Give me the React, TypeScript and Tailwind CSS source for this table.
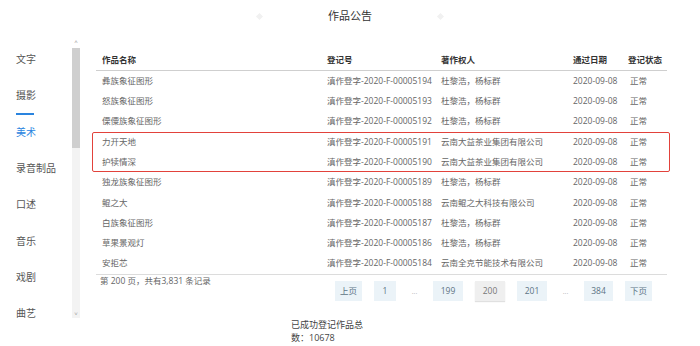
import React from "react";

type Row = { name: string; no: string; owner: string; date: string; state: string };

const rows: Row[] = [
    { name: "彝族象征图形", no: "滇作登字-2020-F-00005194", owner: "杜黎浩，杨标群", date: "2020-09-08", state: "正常" },
    { name: "怒族象征图形", no: "滇作登字-2020-F-00005193", owner: "杜黎浩，杨标群", date: "2020-09-08", state: "正常" },
    { name: "傈僳族象征图形", no: "滇作登字-2020-F-00005192", owner: "杜黎浩，杨标群", date: "2020-09-08", state: "正常" },
    { name: "力开天地", no: "滇作登字-2020-F-00005191", owner: "云南大益茶业集团有限公司", date: "2020-09-08", state: "正常" },
    { name: "护犊情深", no: "滇作登字-2020-F-00005190", owner: "云南大益茶业集团有限公司", date: "2020-09-08", state: "正常" },
    { name: "独龙族象征图形", no: "滇作登字-2020-F-00005189", owner: "杜黎浩，杨标群", date: "2020-09-08", state: "正常" },
    { name: "鲲之大", no: "滇作登字-2020-F-00005188", owner: "云南鲲之大科技有限公司", date: "2020-09-08", state: "正常" },
    { name: "白族象征图形", no: "滇作登字-2020-F-00005187", owner: "杜黎浩，杨标群", date: "2020-09-08", state: "正常" },
    { name: "草果景观灯", no: "滇作登字-2020-F-00005186", owner: "杜黎浩，杨标群", date: "2020-09-08", state: "正常" },
    { name: "安拒芯", no: "滇作登字-2020-F-00005184", owner: "云南全克节能技术有限公司", date: "2020-09-08", state: "正常" },
];

const categories = ["文字", "摄影", "美术", "录音制品", "口述", "音乐", "戏剧", "曲艺"];

const cols = "grid grid-cols-[225px_114px_132px_57px_43px] h-[20.3px] items-center";

const TableRow: React.FC<{ row: Row }> = ({ row }) => (
    <div className={`${cols} text-[8.5px] text-[#666]`}>
        <div className="pl-[6px]">{row.name}</div>
        <div className="pl-[6px]">{row.no}</div>
        <div className="pl-[6px]">{row.owner}</div>
        <div className="pl-[6px]">{row.date}</div>
        <div className="pl-[6px]">{row.state}</div>
    </div>
);

const PageBtn: React.FC<{ label: string; w: string; current?: boolean }> = ({ label, w, current }) => (
    <div
        className={`${w} h-[20px] flex items-center justify-center text-[8.5px] ${current
            ? "bg-[#efefef] text-[#777] shadow-[0_1px_1px_rgba(0,0,0,0.12)]"
            : "bg-[#ebf3f8] text-[#5d7385]"
            }`}
    >
        {label}
    </div>
);

const Dots = () => <div className="w-[13px] h-[20px] flex items-center justify-center text-[7px] text-[#b5b5b5] pt-[3px]">...</div>;

const App: React.FC = () => {
    return (
        <div
            className="w-[700px] h-[346px] bg-white overflow-hidden"
            style={{ fontFamily: '"Open Sans", "Noto Sans CJK SC", sans-serif' }}
        >
            <div className="h-[32px] flex items-center justify-center gap-[66px]">
                <div className="w-[5px] h-[5px] rotate-45 bg-[#f1f1f1]" />
                <h1 className="text-[11px] text-[#333]">作品公告</h1>
                <div className="w-[5px] h-[5px] rotate-45 bg-[#f1f1f1]" />
            </div>

            <div className="flex">
                {/* category menu */}
                <div className="w-[96px] flex">
                    <div className="w-[72px] flex flex-col pt-[9px]">
                        {categories.map((c) => (
                            <div key={c} className="h-[36.4px] flex flex-col pl-[16px]">
                                {c === "美术" ? <div className="w-[18px] h-[2px] bg-[#2a84df] -mt-[1px]" /> : null}
                                <div className={`flex-1 flex items-center text-[10px] ${c === "美术" ? "text-[#2a84df]" : "text-[#555]"}`}>
                                    {c}
                                </div>
                            </div>
                        ))}
                    </div>
                    <div className="w-[8px] flex flex-col pt-[7px] h-[286px]">
                        <div className="h-[9px] flex items-start justify-center text-[6px] leading-[6px] text-[#999]">˄</div>
                        <div className="flex-1 bg-[#f3f3f3] flex flex-col justify-between">
                            <div className="h-[100px] bg-[#cfcfcf]" />
                            <div className="h-[8px] flex items-center justify-center text-[6px] leading-[6px] text-[#999]">˅</div>
                        </div>
                    </div>
                </div>

                {/* table */}
                <div className="w-[571px] pt-[19px]">
                    <div className={`${cols} h-[20px] text-[8.5px] font-bold text-[#333] border-b border-[#cfcfcf]`}>
                        <div className="pl-[6px]">作品名称</div>
                        <div className="pl-[6px]">登记号</div>
                        <div className="pl-[6px]">著作权人</div>
                        <div className="pl-[6px]">通过日期</div>
                        <div className="pl-[4px]">登记状态</div>
                    </div>
                    <div className="border-b border-[#dcdcdc]">
                        {rows.slice(0, 3).map((r) => (
                            <TableRow key={r.no} row={r} />
                        ))}
                        <div className="relative">
                            <div className="absolute -left-[4px] -right-[3px] top-0 bottom-0 border-[1.5px] border-[#e2423b] rounded-[2px]" />
                            {rows.slice(3, 5).map((r) => (
                                <TableRow key={r.no} row={r} />
                            ))}
                        </div>
                        {rows.slice(5).map((r) => (
                            <TableRow key={r.no} row={r} />
                        ))}
                    </div>

                    <div className="flex items-start pt-[1px]">
                        <div className="w-[239px] text-[8.5px] leading-[10px] text-[#666] pl-[4px]">第 200 页，共有3,831 条记录</div>
                        <div className="flex gap-[12px] mt-[5px]">
                            <PageBtn label="上页" w="w-[27px]" />
                            <PageBtn label="1" w="w-[22px]" />
                            <Dots />
                            <PageBtn label="199" w="w-[30px]" />
                            <PageBtn label="200" w="w-[30px]" current />
                            <PageBtn label="201" w="w-[30px]" />
                            <Dots />
                            <PageBtn label="384" w="w-[29px]" />
                            <PageBtn label="下页" w="w-[27px]" />
                        </div>
                    </div>

                    <div className="ml-[195px] mt-[17px] w-[75px] text-[9px] leading-[13px] text-[#444]">
                        已成功登记作品总数：10678
                    </div>
                </div>
            </div>
        </div>
    );
};

export default App;
